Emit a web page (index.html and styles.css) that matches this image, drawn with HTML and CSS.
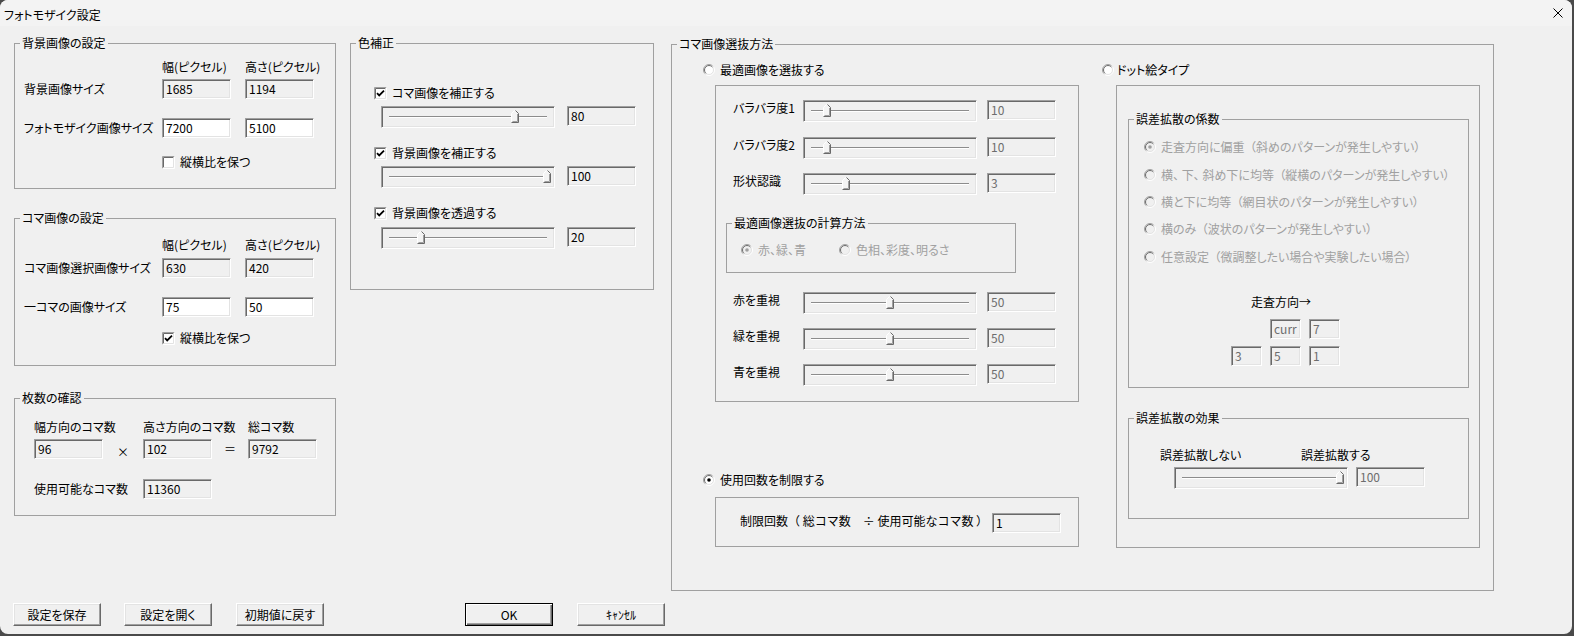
FILE: index.html
```html
<!DOCTYPE html>
<html lang="ja">
<head>
  <meta charset="UTF-8">
  <meta name="viewport" content="width=device-width, initial-scale=1.0">
  <title>フォトモザイク設定</title>
  <link rel="stylesheet" href="styles.css">
</head>
<body>
  <!-- shared control glyphs -->
  <svg class="defs" aria-hidden="true">
    <defs>
      <linearGradient id="rimOuter" x1="0" y1="0" x2="1" y2="1">
        <stop offset="0.4" stop-color="#a0a0a0"/>
        <stop offset="0.6" stop-color="#ffffff"/>
      </linearGradient>
      <linearGradient id="rimInner" x1="0" y1="0" x2="1" y2="1">
        <stop offset="0.4" stop-color="#696969"/>
        <stop offset="0.6" stop-color="#e3e3e3"/>
      </linearGradient>
      <symbol id="radio" viewBox="0 0 12 12">
        <circle cx="6" cy="6" r="5.5" fill="none" stroke="url(#rimOuter)"/>
        <circle cx="6" cy="6" r="4.5" stroke="url(#rimInner)"/>
      </symbol>
      <symbol id="box" viewBox="0 0 13 13">
        <rect x="1" y="1" width="11" height="11" fill="#fff"/>
        <path d="M0.5 12.5V0.5H12.5" fill="none" stroke="#a0a0a0"/>
        <path d="M1.5 11.5V1.5H11.5" fill="none" stroke="#696969"/>
        <path d="M1.5 11.5H11.5V1.5" fill="none" stroke="#e3e3e3"/>
        <path d="M0.5 12.5H12.5V0.5" fill="none" stroke="#fff"/>
      </symbol>
      <symbol id="thumb" viewBox="0 0 8 13">
        <path d="M0.5 12.5V3.5L3.5 0.5H4.5L7.5 3.5V12.5Z" fill="#f4f4f4"/>
        <path d="M0.5 12V3.5L3.5 0.5H4" fill="none" stroke="#fff"/>
        <path d="M4.5 0.5L7.5 3.5V12.5H0.5" fill="none" stroke="#696969"/>
        <path d="M1.5 11.5H6.5V4" fill="none" stroke="#a0a0a0"/>
      </symbol>
    </defs>
  </svg>

  <div class="window">
    <header class="titlebar">
      <span class="title">フォトモザイク設定</span>
      <svg class="close" viewBox="0 0 10 10"><path d="M0.5 0.5 9.5 9.5M9.5 0.5 0.5 9.5"/></svg>
    </header>

    <div class="main">
      <!-- left column -->
      <div class="col col-left">
        <fieldset class="group g-bg">
          <legend>背景画像の設定</legend>
          <div class="size-pane">
            <div class="row head mt7"><span class="cell">幅(ピクセル)</span><span class="cell">高さ(ピクセル)</span></div>
            <div class="row mt2"><span class="name">背景画像サイズ</span><span class="field">1685</span><span class="field">1194</span></div>
            <div class="row mt19"><span class="name">フォトモザイク画像サイズ</span><span class="field edit">7200</span><span class="field edit">5100</span></div>
            <div class="row opt-row mt14">
              <svg class="check" viewBox="0 0 13 13"><use href="#box"/></svg><span>縦横比を保つ</span>
            </div>
          </div>
        </fieldset>

        <fieldset class="group g-piece">
          <legend>コマ画像の設定</legend>
          <div class="size-pane">
            <div class="row head mt10"><span class="cell">幅(ピクセル)</span><span class="cell">高さ(ピクセル)</span></div>
            <div class="row mt3"><span class="name">コマ画像選択画像サイズ</span><span class="field">630</span><span class="field">420</span></div>
            <div class="row mt19"><span class="name">一コマの画像サイズ</span><span class="field edit">75</span><span class="field edit">50</span></div>
            <div class="row opt-row mt11">
              <svg class="check" viewBox="0 0 13 13"><use href="#box"/><path class="tick" d="M3 6.2 5.2 8.4 10 3.6"/></svg><span>縦横比を保つ</span>
            </div>
          </div>
        </fieldset>

        <fieldset class="group g-count">
          <legend>枚数の確認</legend>
          <div class="count-pane">
            <div class="row mt12"><span class="c1">幅方向のコマ数</span><span class="c2">高さ方向のコマ数</span><span>総コマ数</span></div>
            <div class="row mt2">
              <span class="field">96</span><span class="op op-x">×</span>
              <span class="field">102</span><span class="op op-eq">＝</span>
              <span class="field">9792</span>
            </div>
            <div class="row mt20"><span class="c1">使用可能なコマ数</span><span class="field">11360</span></div>
          </div>
        </fieldset>
      </div>

      <!-- middle column -->
      <div class="col col-mid">
        <fieldset class="group g-color">
          <legend>色補正</legend>
          <div class="color-pane">
            <div class="row mt33">
              <svg class="check" viewBox="0 0 13 13"><use href="#box"/><path class="tick" d="M3 6.2 5.2 8.4 10 3.6"/></svg><span>コマ画像を補正する</span>
            </div>
            <div class="row slide-row mt3">
              <div class="slider"><span class="track"></span><svg class="thumb" viewBox="0 0 8 13" style="--v: 0.8"><use href="#thumb"/></svg></div>
              <span class="field">80</span>
            </div>
            <div class="row mt15">
              <svg class="check" viewBox="0 0 13 13"><use href="#box"/><path class="tick" d="M3 6.2 5.2 8.4 10 3.6"/></svg><span>背景画像を補正する</span>
            </div>
            <div class="row slide-row mt3">
              <div class="slider"><span class="track"></span><svg class="thumb" viewBox="0 0 8 13" style="--v: 1"><use href="#thumb"/></svg></div>
              <span class="field">100</span>
            </div>
            <div class="row mt15">
              <svg class="check" viewBox="0 0 13 13"><use href="#box"/><path class="tick" d="M3 6.2 5.2 8.4 10 3.6"/></svg><span>背景画像を透過する</span>
            </div>
            <div class="row slide-row mt4">
              <div class="slider"><span class="track"></span><svg class="thumb" viewBox="0 0 8 13" style="--v: 0.2"><use href="#thumb"/></svg></div>
              <span class="field">20</span>
            </div>
          </div>
        </fieldset>
      </div>

      <!-- right column -->
      <div class="col col-right">
        <fieldset class="group g-pick">
          <legend>コマ画像選抜方法</legend>
          <div class="pick-pane">
            <div class="pick-col">
              <div class="row radio-row mt9">
                <svg class="radio" viewBox="0 0 12 12"><use href="#radio"/></svg><span>最適画像を選抜する</span>
              </div>
              <div class="box best-box mt5">
                <div class="row slide-row mt14">
                  <span class="sname">バラバラ度1</span>
                  <div class="slider"><span class="track"></span><svg class="thumb" viewBox="0 0 8 13" style="--v: 0.1"><use href="#thumb"/></svg></div>
                  <span class="field dis">10</span>
                </div>
                <div class="row slide-row mt15">
                  <span class="sname">バラバラ度2</span>
                  <div class="slider"><span class="track"></span><svg class="thumb" viewBox="0 0 8 13" style="--v: 0.1"><use href="#thumb"/></svg></div>
                  <span class="field dis">10</span>
                </div>
                <div class="row slide-row mt14">
                  <span class="sname">形状認識</span>
                  <div class="slider"><span class="track"></span><svg class="thumb" viewBox="0 0 8 13" style="--v: 0.22"><use href="#thumb"/></svg></div>
                  <span class="field dis">3</span>
                </div>

                <fieldset class="group g-calc mt21">
                  <legend>最適画像選抜の計算方法</legend>
                  <div class="row radio-row calc-row mt10">
                    <span class="calc-opt">
                      <svg class="radio off on" viewBox="0 0 12 12"><use href="#radio"/><circle class="dot" cx="6" cy="6" r="1.8"/></svg><span class="dim">赤、緑、青</span>
                    </span>
                    <span class="calc-opt">
                      <svg class="radio off" viewBox="0 0 12 12"><use href="#radio"/></svg><span class="dim">色相、彩度、明るさ</span>
                    </span>
                  </div>
                </fieldset>

                <div class="row slide-row mt19">
                  <span class="sname">赤を重視</span>
                  <div class="slider"><span class="track"></span><svg class="thumb" viewBox="0 0 8 13" style="--v: 0.5"><use href="#thumb"/></svg></div>
                  <span class="field dis">50</span>
                </div>
                <div class="row slide-row mt14">
                  <span class="sname">緑を重視</span>
                  <div class="slider"><span class="track"></span><svg class="thumb" viewBox="0 0 8 13" style="--v: 0.5"><use href="#thumb"/></svg></div>
                  <span class="field dis">50</span>
                </div>
                <div class="row slide-row mt14">
                  <span class="sname">青を重視</span>
                  <div class="slider"><span class="track"></span><svg class="thumb" viewBox="0 0 8 13" style="--v: 0.5"><use href="#thumb"/></svg></div>
                  <span class="field dis">50</span>
                </div>
              </div>

              <div class="row radio-row mt68">
                <svg class="radio on" viewBox="0 0 12 12"><use href="#radio"/><circle class="dot" cx="6" cy="6" r="1.8"/></svg><span>使用回数を制限する</span>
              </div>
              <div class="box limit-box mt7">
                <div class="row slide-row mt15">
                  <span class="limit-lbl">制限回数（ 総コマ数　÷ 使用可能なコマ数 ）</span>
                  <span class="field">1</span>
                </div>
              </div>
            </div>

            <div class="pick-col dot-col">
              <div class="row radio-row dot-radio mt9">
                <svg class="radio" viewBox="0 0 12 12"><use href="#radio"/></svg><span>ドット絵タイプ</span>
              </div>
              <div class="box dot-box mt5">
                <fieldset class="group g-coef mt26">
                  <legend>誤差拡散の係数</legend>
                  <div class="coef-pane">
                    <div class="row radio-row mt11">
                      <svg class="radio off on" viewBox="0 0 12 12"><use href="#radio"/><circle class="dot" cx="6" cy="6" r="1.8"/></svg><span class="dim">走査方向に偏重 &nbsp;（斜めのパターンが発生しやすい）</span>
                    </div>
                    <div class="row radio-row mt8">
                      <svg class="radio off" viewBox="0 0 12 12"><use href="#radio"/></svg><span class="dim">横、 下、 斜め下に均等 &nbsp;（縦横のパターンが発生しやすい）</span>
                    </div>
                    <div class="row radio-row mt7">
                      <svg class="radio off" viewBox="0 0 12 12"><use href="#radio"/></svg><span class="dim">横と下に均等 &nbsp;（網目状のパターンが発生しやすい）</span>
                    </div>
                    <div class="row radio-row mt7">
                      <svg class="radio off" viewBox="0 0 12 12"><use href="#radio"/></svg><span class="dim">横のみ &nbsp;（波状のパターンが発生しやすい）</span>
                    </div>
                    <div class="row radio-row mt8">
                      <svg class="radio off" viewBox="0 0 12 12"><use href="#radio"/></svg><span class="dim">任意設定 &nbsp;（微調整したい場合や実験したい場合）</span>
                    </div>
                    <div class="row scan-lbl mt25">走査方向→</div>
                    <div class="kernel mt7">
                      <span></span>
                      <span class="field small dis">curr</span>
                      <span class="field small dis">7</span>
                      <span class="field small dis">3</span>
                      <span class="field small dis">5</span>
                      <span class="field small dis">1</span>
                    </div>
                  </div>
                </fieldset>

                <fieldset class="group g-effect mt23">
                  <legend>誤差拡散の効果</legend>
                  <div class="effect-pane">
                    <div class="row mt20"><span class="eff-lbl">誤差拡散しない</span><span>誤差拡散する</span></div>
                    <div class="row slide-row mt2">
                      <div class="slider"><span class="track"></span><svg class="thumb" viewBox="0 0 8 13" style="--v: 1"><use href="#thumb"/></svg></div>
                      <span class="field dis">100</span>
                    </div>
                  </div>
                </fieldset>
              </div>
            </div>
          </div>
        </fieldset>
      </div>
    </div>

    <!-- Dialog Buttons -->
    <div class="footer">
      <button class="btn">設定を保存</button>
      <button class="btn">設定を開く</button>
      <button class="btn">初期値に戻す</button>
      <button class="btn default">OK</button>
      <button class="btn">ｷｬﾝｾﾙ</button>
    </div>
  </div>
</body>
</html>
```

FILE: styles.css
```css
/* General Styles */
* {
  box-sizing: border-box;
}

body {
  margin: 0;
  width: 1574px;
  height: 636px;
  overflow: hidden;
  background-color: #4a4a4a;
  color: #000;
  font: 12px/20px "Noto Sans CJK JP", "Noto Sans", sans-serif;
  font-feature-settings: "palt";
}

.defs {
  position: absolute;
  width: 0;
  height: 0;
}

.window {
  width: 1572px;
  height: 634px;
  background-color: #f0f0f0;
  border-radius: 8px;
  overflow: hidden;
}

/* Title Bar */
.titlebar {
  height: 26px;
  background-color: #f3f3f3;
  display: flex;
  justify-content: space-between;
  align-items: flex-start;
}

.title {
  margin: 5px 0 0 4px;
}

.close {
  width: 10px;
  height: 10px;
  margin: 8px 9px 0 0;
  stroke: #000;
  stroke-width: 1;
}

/* Columns */
.main {
  display: flex;
  align-items: flex-start;
  height: 565px;
  padding: 10px 0 0 14px;
}

.col-left {
  width: 322px;
}

.col-mid {
  width: 304px;
  margin-left: 14px;
}

.col-right {
  width: 823px;
  margin-left: 17px;
  margin-top: 1px;
}

/* Group Boxes */
.group {
  margin: 0;
  padding: 0;
  border: 1px solid #a0a0a0;
  min-width: 0;
}

.group > legend {
  margin-left: 5px;
  padding: 0 2px;
  line-height: 14px;
}

.box {
  border: 1px solid #a0a0a0;
}

.g-bg { height: 153px; }
.g-piece { height: 155px; margin-top: 22px; }
.g-count { height: 125px; margin-top: 25px; }
.g-color { height: 254px; }
.g-pick { height: 554px; }

/* Rows */
.row {
  display: flex;
  align-items: center;
  height: 20px;
  white-space: nowrap;
}

.slide-row {
  height: 22px;
  align-items: flex-start;
}

.mt2 { margin-top: 2px; }
.mt3 { margin-top: 3px; }
.mt4 { margin-top: 4px; }
.mt5 { margin-top: 5px; }
.mt7 { margin-top: 7px; }
.mt8 { margin-top: 8px; }
.mt9 { margin-top: 9px; }
.mt10 { margin-top: 10px; }
.mt11 { margin-top: 11px; }
.mt12 { margin-top: 12px; }
.mt14 { margin-top: 14px; }
.mt15 { margin-top: 15px; }
.mt19 { margin-top: 19px; }
.mt20 { margin-top: 20px; }
.mt21 { margin-top: 21px; }
.mt23 { margin-top: 23px; }
.mt25 { margin-top: 25px; }
.mt26 { margin-top: 26px; }
.mt33 { margin-top: 33px; }
.mt68 { margin-top: 68px; }

/* Edit Fields */
.field {
  width: 69px;
  height: 20px;
  flex: none;
  border: 1px solid;
  border-color: #a0a0a0 #fff #fff #a0a0a0;
  box-shadow: inset 1px 1px 0 #696969, inset -1px -1px 0 #e3e3e3;
  background-color: #f0f0f0;
  padding: 0 0 0 3px;
  line-height: 17px;
  overflow: hidden;
}

.field.edit {
  background-color: #fff;
}

.field.dis {
  color: #6d6d6d;
}

.field.small {
  width: 31px;
}

/* Check Boxes and Radio Buttons */
.check {
  width: 13px;
  height: 13px;
  flex: none;
  margin-right: 5px;
}

.tick {
  fill: none;
  stroke: #000;
  stroke-width: 1.8;
}

.radio {
  width: 12px;
  height: 12px;
  flex: none;
  fill: #fff;
  margin-right: 5px;
}

.radio.off {
  fill: #f0f0f0;
}

.dot {
  fill: #000;
}

.radio.off .dot {
  fill: #a0a0a0;
}

.dim {
  color: #a0a0a0;
}

/* Sliders */
.slider {
  position: relative;
  width: 174px;
  height: 22px;
  flex: none;
  border: 1px solid;
  border-color: #a0a0a0 #fff #fff #a0a0a0;
  box-shadow: inset 1px 1px 0 #696969, inset -1px -1px 0 #e3e3e3;
}

.track {
  display: block;
  width: 158px;
  height: 2px;
  margin: 9px 0 0 7px;
  border-top: 1px solid #8c8c8c;
  border-bottom: 1px solid #fff;
}

.thumb {
  position: absolute;
  top: 3px;
  left: calc(3px + var(--v) * 158px);
  width: 8px;
  height: 13px;
}

/* Size Groups */
.size-pane {
  padding-left: 9px;
}

.size-pane .row {
  gap: 14px;
}

.size-pane .name {
  width: 124px;
}

.size-pane .head {
  padding-left: 138px;
}

.size-pane .cell {
  width: 69px;
}

.size-pane .opt-row {
  gap: 0;
  padding-left: 138px;
}

/* Count Group */
.count-pane {
  padding-left: 19px;
}

.count-pane .c1 {
  width: 109px;
}

.count-pane .c2 {
  width: 105px;
}

.op {
  text-align: center;
}

.op-x {
  width: 40px;
  padding-top: 5px;
}

.op-eq {
  width: 36px;
}

/* Color Group */
.color-pane {
  padding-left: 23px;
}

.color-pane .slider {
  margin-left: 7px;
}

.color-pane .slider + .field {
  margin-left: 12px;
}

/* Selection Group */
.pick-pane {
  display: flex;
  padding-left: 31px;
}

.pick-col {
  width: 376px;
}

.dot-col {
  width: 378px;
  margin-left: 23px;
}

.best-box,
.limit-box {
  width: 364px;
  margin-left: 12px;
}

.best-box {
  height: 317px;
  padding-left: 17px;
}

.limit-box {
  height: 50px;
  padding-left: 24px;
}

.best-box .slider + .field {
  margin-left: 10px;
}

.sname {
  width: 70px;
  line-height: 16px;
}

.g-calc {
  width: 290px;
  height: 57px;
  margin-left: -7px;
}

.calc-row {
  padding-left: 14px;
}

.calc-opt {
  display: flex;
  align-items: center;
  width: 98px;
}

.limit-lbl {
  width: 252px;
  line-height: 16px;
  font-feature-settings: normal;
}

.dot-radio .radio {
  margin-right: 3px;
}

.dot-box {
  width: 364px;
  height: 463px;
  margin-left: 14px;
}

.g-coef,
.g-effect {
  width: 341px;
  margin-left: 11px;
}

.g-coef {
  height: 276px;
}

.coef-pane {
  padding-left: 15px;
}

.scan-lbl {
  padding-left: 107px;
}

.kernel {
  display: grid;
  grid-template-columns: repeat(3, 31px);
  gap: 7px 8px;
  margin-left: 87px;
}

.g-effect {
  height: 108px;
}

.effect-pane {
  padding-left: 31px;
}

.eff-lbl {
  width: 141px;
}

.effect-pane .slider {
  margin-left: 14px;
}

.effect-pane .slider + .field {
  margin-left: 8px;
}

/* Dialog Buttons */
.footer {
  display: flex;
  padding: 12px 0 0 13px;
}

.btn {
  width: 88px;
  height: 23px;
  padding: 0;
  border: 1px solid;
  border-color: #fff #696969 #696969 #fff;
  box-shadow: inset -1px -1px 0 #a0a0a0, inset 1px 1px 0 #e3e3e3;
  background-color: #f0f0f0;
  color: #000;
  font: inherit;
  line-height: 20px;
  text-align: center;
}

.btn + .btn {
  margin-left: 23px;
}

.btn:nth-child(3),
.btn:nth-child(5) {
  margin-left: 24px;
}

.btn.default {
  margin-left: 141px;
  border-color: #000;
  box-shadow: inset 1px 1px 0 #fff, inset -1px -1px 0 #696969, inset -2px -2px 0 #a0a0a0;
}
```
